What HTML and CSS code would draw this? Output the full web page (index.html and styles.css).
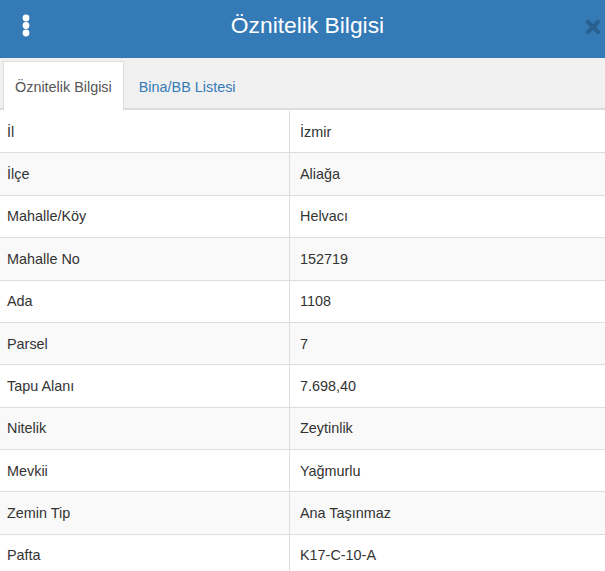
FILE: index.html
```html
<!DOCTYPE html>
<html>
<head>
  <title>Öznitelik Bilgisi</title>
  <link rel="stylesheet" href="styles.css">
</head>
<body>
  <div class="panel">
    <div class="panel-header">
      <span class="menu-dots">
        <svg width="10" height="24" viewBox="0 0 10 24">
          <circle cx="5" cy="5" r="3.4" fill="#fff"/>
          <circle cx="5" cy="12.5" r="3.4" fill="#fff"/>
          <circle cx="5" cy="20" r="3.4" fill="#fff"/>
        </svg>
      </span>
      <h1 class="panel-title">Öznitelik Bilgisi</h1>
      <span class="close">
        <svg width="16" height="16" viewBox="0 0 16 16">
          <path d="M3 3 L13 13 M13 3 L3 13" stroke="#000" stroke-width="4.2" stroke-linecap="round"/>
        </svg>
      </span>
    </div>

    <ul class="tabs">
      <li class="tab active">Öznitelik Bilgisi</li>
      <li class="tab">Bina/BB Listesi</li>
    </ul>

    <table class="attr-table">
      <tr><td>İl</td><td>İzmir</td></tr>
      <tr><td>İlçe</td><td>Aliağa</td></tr>
      <tr><td>Mahalle/Köy</td><td>Helvacı</td></tr>
      <tr><td>Mahalle No</td><td>152719</td></tr>
      <tr><td>Ada</td><td>1108</td></tr>
      <tr><td>Parsel</td><td>7</td></tr>
      <tr><td>Tapu Alanı</td><td>7.698,40</td></tr>
      <tr><td>Nitelik</td><td>Zeytinlik</td></tr>
      <tr><td>Mevkii</td><td>Yağmurlu</td></tr>
      <tr><td>Zemin Tip</td><td>Ana Taşınmaz</td></tr>
      <tr><td>Pafta</td><td>K17-C-10-A</td></tr>
    </table>
  </div>
</body>
</html>
```

FILE: styles.css
```css
body {
  margin: 0;
  font-family: 'Liberation Sans', Arial, sans-serif;
  font-size: 14.4px;
  color: #333;
  background-color: #fff;
  overflow: hidden;
}

.panel {
  width: 605px;
}

/* blue title bar */
.panel-header {
  height: 58px;
  background-color: #337ab7;
  display: flex;
  align-items: center;
  position: relative;
}

.menu-dots {
  width: 52px;
  display: flex;
  justify-content: center;
  margin-top: -8px;
}

.panel-title {
  flex: 1;
  margin: 0;
  text-align: center;
  color: #fff;
  font-size: 22.8px;
  font-weight: normal;
  margin-top: -8px;
  padding-right: 42px;
}

.close {
  position: absolute;
  right: 4px;
  top: 19px;
  opacity: 0.2;
  line-height: 0;
}

/* tabs */
.tabs {
  list-style: none;
  margin: 0;
  padding: 3px 0 0 3px;
  height: 47px;
  background-color: #f0f0f0;
  border-bottom: 2px solid #ddd;
  display: flex;
}

.tab {
  padding: 0 11px;
  height: 47px;
  line-height: 50px;
  color: #337ab7;
  border: 1px solid transparent;
  border-bottom: none;
}

.tab.active {
  color: #555;
  background-color: #fff;
  border-color: #ddd;
  height: 48px;
  margin-bottom: -2px;
  margin-right: 3px;
}

/* attribute table */
.attr-table {
  width: 100%;
  border-collapse: collapse;
  margin-top: 1px;
}

.attr-table td {
  padding: 10.7px 7px;
  line-height: 20px;
  border-top: 1px solid #ddd;
}

.attr-table tr:first-child td {
  border-top: none;
}

.attr-table td:first-child {
  width: 275px;
  border-right: 1px solid #ddd;
}

.attr-table td:last-child {
  padding-left: 10px;
}

.attr-table tr:nth-child(even) {
  background-color: #f9f9f9;
}
```
